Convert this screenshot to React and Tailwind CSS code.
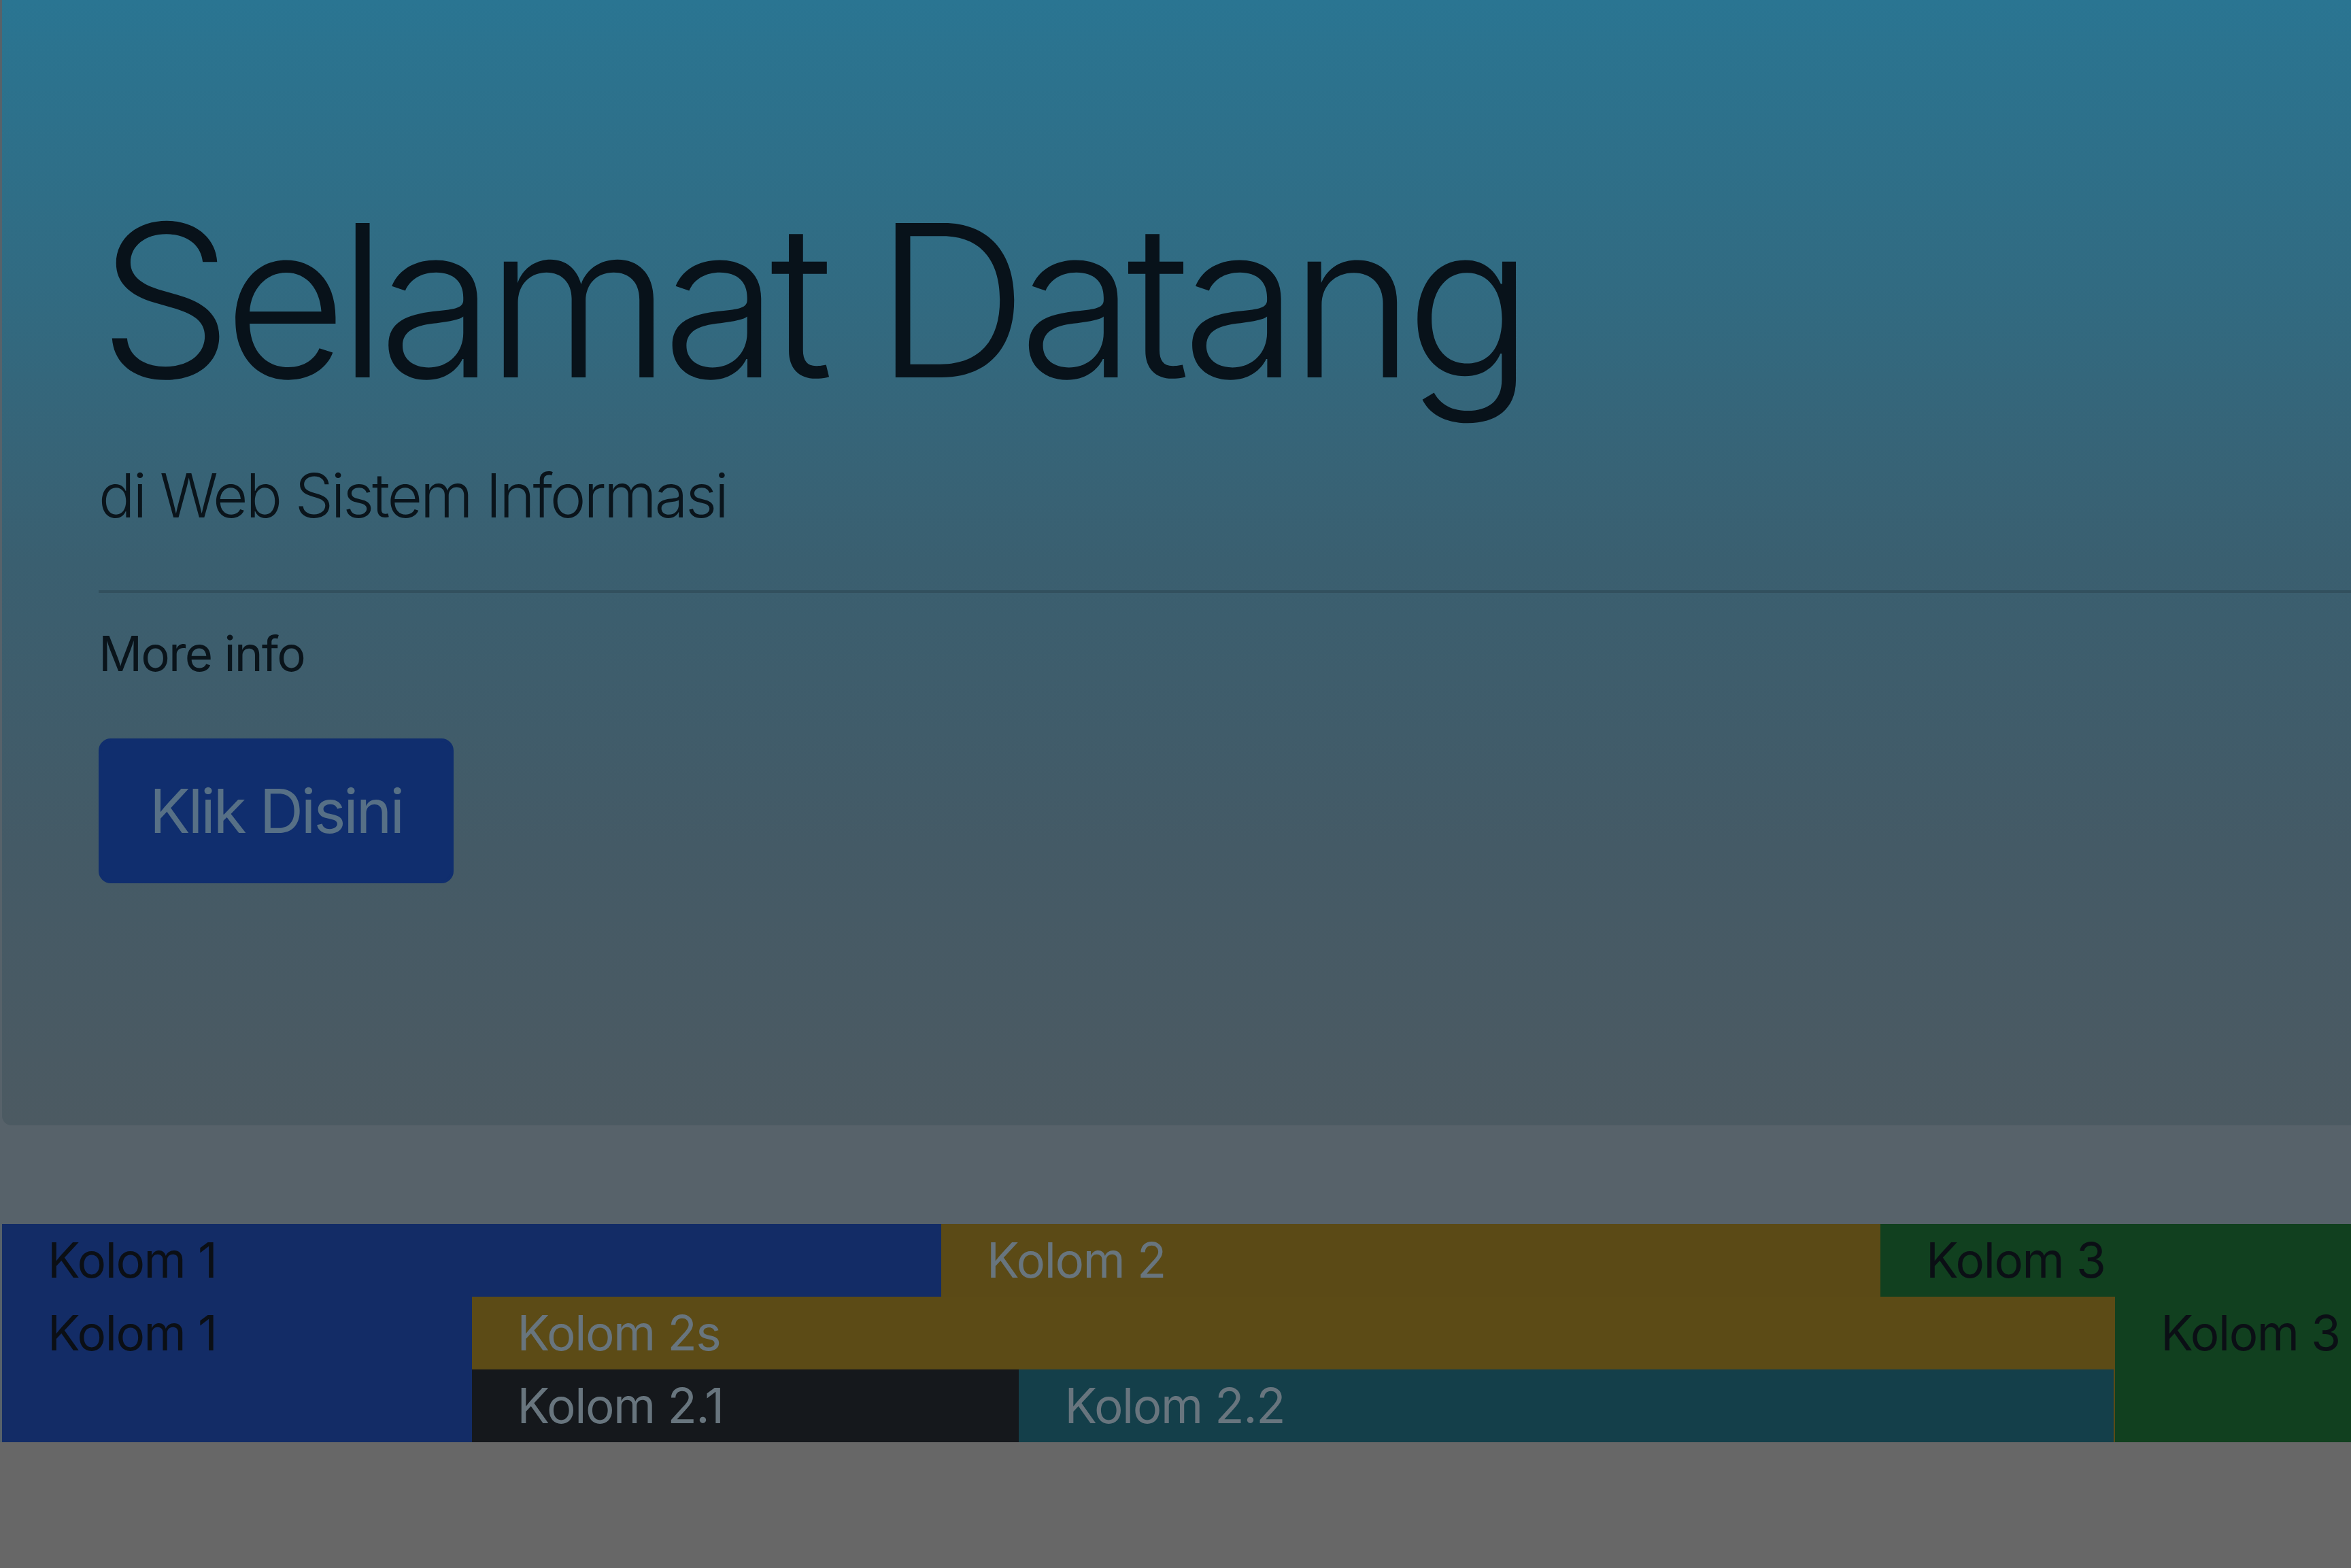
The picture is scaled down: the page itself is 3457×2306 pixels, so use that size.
import React from 'react';

// warna sudah termasuk gelapnya backdrop modal di screenshot
export default function App() {
  return (
    <div className="w-[3457px] min-h-screen overflow-hidden bg-[#676767] font-['Inter','Liberation_Sans',sans-serif]">
      <div className="pl-[3px] bg-[#57626a]">
        <div className="w-[3700px] rounded-bl-[14px] px-[142px] pt-[249px] pb-[356px] bg-[linear-gradient(to_bottom,#2a7592,#316b82_25%,#3a5f70_50%,#445a66_75%,#4c5a62)]">
          <h1 className="text-[312px] leading-[385px] font-light tracking-[-0.042em] text-[#08121a] mb-[28px]">Selamat Datang</h1>
          <p className="text-[89px] leading-[134px] font-light tracking-[-0.036em] text-[#0a141b] mb-[72px]">di Web Sistem Informasi</p>
          <div className="h-[4px] bg-black/15 mb-[36px]"></div>
          <p className="text-[71px] leading-[107px] tracking-[-0.026em] text-[#0a141b] mb-[71px]">More info</p>
          <button className="inline-block px-[71px] py-[35px] border-[4px] border-[#102e6e] bg-[#102e6e] rounded-[18px] text-[89px] leading-[135px] tracking-[-0.034em] text-[#577086]">
            Klik Disini
          </button>
        </div>

        <div className="mt-[145px] w-[4143px] text-[71px] leading-[107px] tracking-[-0.02em]">
          <div className="flex">
            <div className="w-1/3 px-[67px] bg-[#132c66] text-[#0b0f15]">Kolom 1</div>
            <div className="w-1/3 px-[67px] bg-[#5b4a16] text-[#68757e]">Kolom 2</div>
            <div className="w-1/3 px-[67px] bg-[#11401f] text-[#0b0f15]">Kolom 3</div>
          </div>
          <div className="flex">
            <div className="w-1/6 px-[67px] bg-[#132c66] text-[#0b0f15]">Kolom 1</div>
            <div className="w-7/12 bg-[#5c4b16] text-[#68757e]">
              <div className="px-[67px]">Kolom 2s</div>
              <div className="flex mr-[2px]">
                <div className="w-1/3 px-[67px] bg-[#15181c]">Kolom 2.1</div>
                <div className="w-2/3 px-[67px] bg-[#143f4a]">Kolom 2.2</div>
              </div>
            </div>
            <div className="w-1/4 px-[67px] bg-[#11401f] text-[#0b0f15]">Kolom 3</div>
          </div>
        </div>
      </div>
    </div>
  );
}
